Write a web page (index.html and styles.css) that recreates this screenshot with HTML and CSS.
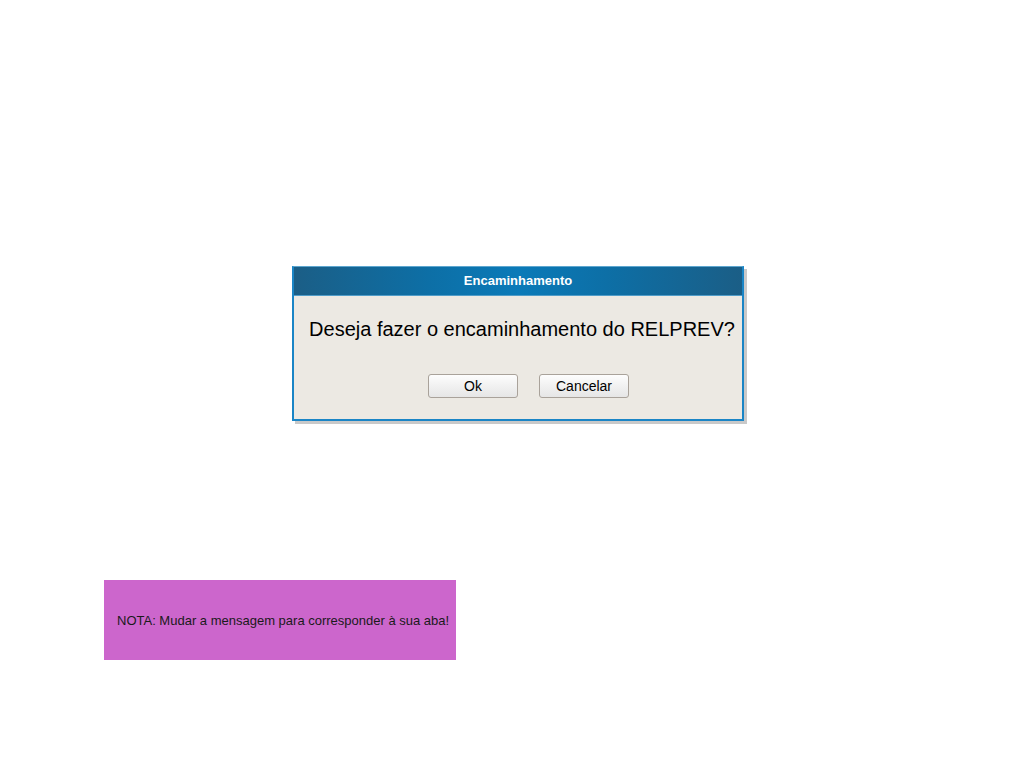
FILE: index.html
```html
<!DOCTYPE html>
<html lang="pt">
<head>
<meta charset="utf-8">
<title>Encaminhamento</title>
<link rel="stylesheet" href="styles.css">
</head>
<body>
<div class="page">
  <div class="dialog">
    <div class="dialog-title">Encaminhamento</div>
    <div class="dialog-body">
      <p class="dialog-message">Deseja fazer o encaminhamento do RELPREV?</p>
      <div class="dialog-actions">
        <button class="btn" type="button">Ok</button>
        <button class="btn" type="button">Cancelar</button>
      </div>
    </div>
  </div>
  <div class="note">NOTA: Mudar a mensagem para corresponder à sua aba!</div>
</div>
</body>
</html>
```
FILE: styles.css
```css
html, body {
  margin: 0;
  padding: 0;
  background: #ffffff;
  font-family: "Liberation Sans", Arial, sans-serif;
}

.page {
  padding-top: 266px;
  display: flex;
  flex-direction: column;
}

.dialog {
  margin-left: 292px;
  width: 448px;
  border: 2px solid #1a85c6;
  border-top: 1px solid #5da6cf;
  background: #ece9e3;
  box-shadow: 3px 3px 0 #c9c9c9;
}

.dialog-title {
  height: 28px;
  line-height: 28px;
  text-align: center;
  color: #ffffff;
  font-size: 13px;
  font-weight: bold;
  background: linear-gradient(to right, #1b5e86 0%, #0d6fa6 30%, #0a7ab8 50%, #0d6fa6 70%, #1b5e86 100%);
  border-bottom: 1px solid #4f9cc8;
}

.dialog-body {
  padding: 22px 0 21px;
}

.dialog-message {
  margin: 0;
  padding-left: 8px;
  font-size: 20px;
  line-height: 23px;
  color: #000000;
  text-align: center;
}

.dialog-actions {
  margin-top: 33px;
  display: flex;
  justify-content: center;
  gap: 21px;
  padding-left: 21px;
}

.btn {
  width: 90px;
  height: 24px;
  padding: 0;
  font-family: "Liberation Sans", Arial, sans-serif;
  font-size: 14px;
  color: #000000;
  background: linear-gradient(to bottom, #fdfdfd 0%, #f1f1f1 50%, #e6e6e6 100%);
  border: 1px solid #a9a29a;
  border-radius: 3px;
}

.note {
  margin-top: 159px;
  margin-left: 104px;
  width: 352px;
  height: 80px;
  box-sizing: border-box;
  padding-left: 13px;
  display: flex;
  align-items: center;
  background: #cc66cc;
  color: #1a1a1a;
  font-size: 13px;
}
```
